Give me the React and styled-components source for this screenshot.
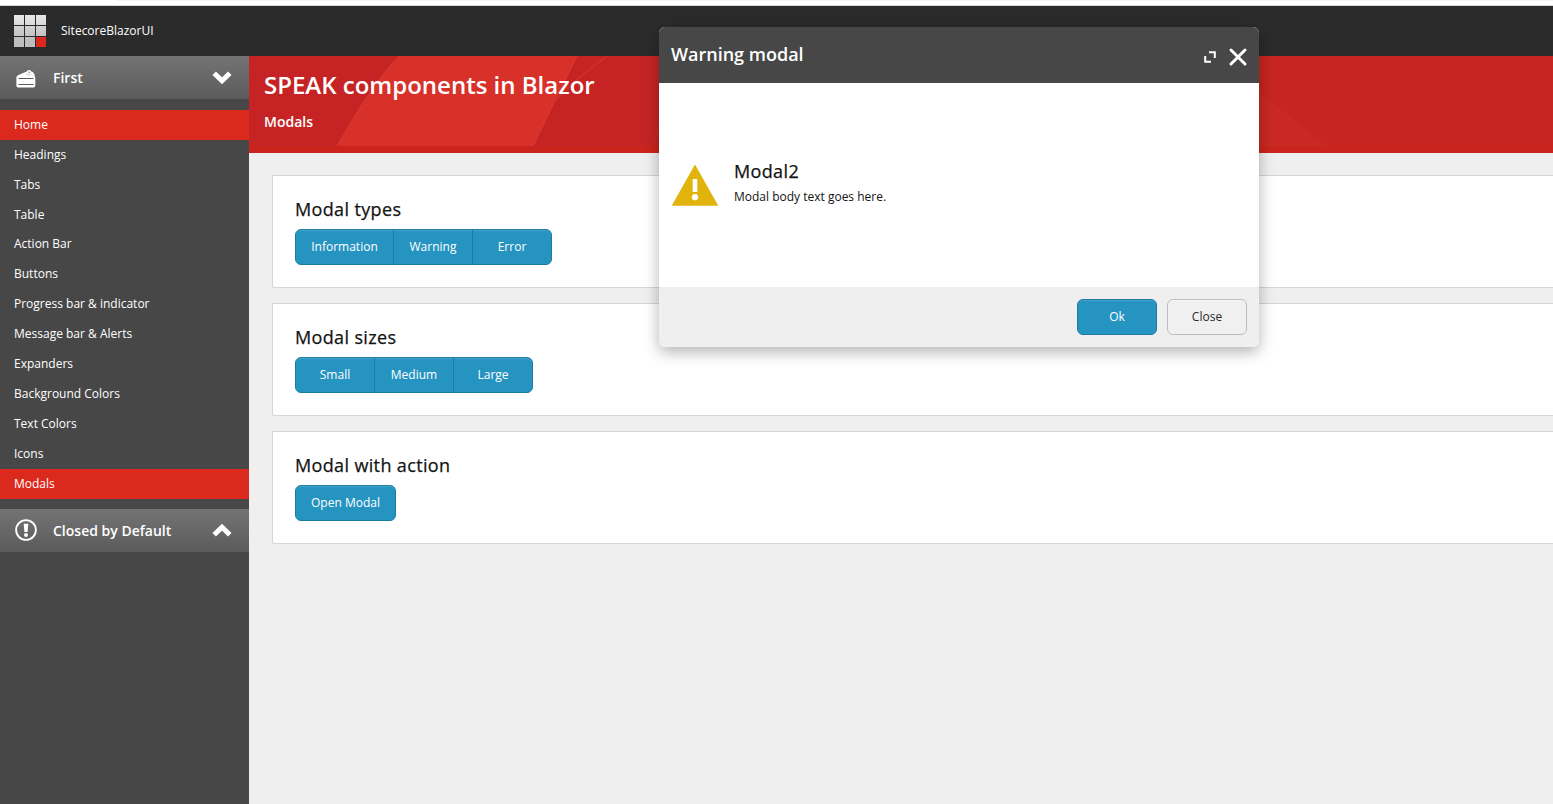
import React from 'react';
import styled, { createGlobalStyle, css } from 'styled-components';

const GlobalStyle = createGlobalStyle`
  * { box-sizing: border-box; }
  html, body { margin: 0; height: 100%; overflow: hidden; }
  body {
    background: #efefef;
    font-family: "Open Sans", "Noto Sans", sans-serif;
    font-size: 12px;
    line-height: 18px;
    color: #131313;
  }
  h1, h2, p { margin: 0; }
`;

const Page = styled.div`
  display: flex;
  flex-direction: column;
  width: 100%;
  height: 804px;
  overflow: hidden;
`;

const WindowEdge = styled.div`
  flex: none;
  height: 6px;
  background: linear-gradient(#f2f2f2, #f2f2f2) 117px 0 / 100% 1px no-repeat #fff;
  border-bottom: 1px solid #d3dbd5;
`;

const TopBar = styled.header`
  flex: none;
  display: flex;
  align-items: center;
  gap: 15px;
  height: 50px;
  padding-left: 14px;
  background: #2b2b2b;
  color: #fff;
`;

const AppName = styled.span`
  font-size: 12px;
`;

const Logo = styled.div`
  display: grid;
  grid-template-columns: repeat(3, 10px);
  grid-auto-rows: 10px;
  gap: 1px;
`;

const LogoTile = styled.span`
  background: ${(p) => p.$fill};
`;

const Body = styled.div`
  flex: 1;
  display: flex;
  min-height: 0;
`;

const Sidebar = styled.nav`
  flex: none;
  width: 249px;
  background: #474747;
  color: #fff;
`;

const GroupHeader = styled.div`
  display: flex;
  align-items: center;
  height: 43px;
  padding: 0 17px 0 15px;
  background: linear-gradient(#747474, #5b5b5b);
  font-size: 14px;
  font-weight: 600;
`;

const GroupTitle = styled.span`
  flex: 1;
  margin-left: 16px;
`;

const NavList = styled.div`
  height: 410px;
  padding-top: 10.9px;
`;

const NavItem = styled.div`
  height: 29.892px;
  padding-left: 14px;
  line-height: 30px;
  background: ${(p) => (p.$active ? '#dc291e' : 'transparent')};
  &:last-child { height: 30.4px; }
`;

const Main = styled.main`
  flex: 1;
  min-width: 0;
`;

const Banner = styled.section`
  position: relative;
  height: 97px;
  padding: 11px 15px;
  background: #c62424;
  border-bottom: 7px solid #cb241c;
  color: #fff;
`;

const BannerArt = styled.svg`
  position: absolute;
  left: 0;
  top: 0;
`;

const Title = styled.h1`
  position: relative;
  font-size: 24px;
  line-height: 36px;
  font-weight: 600;
`;

const Subtitle = styled.h2`
  position: relative;
  margin-top: 10px;
  font-size: 14px;
  line-height: 18px;
  font-weight: 600;
`;

const Cards = styled.div`
  display: flex;
  flex-direction: column;
  gap: 15px;
  padding: 22px 0 0 23px;
`;

const Card = styled.section`
  height: 113px;
  padding: 21px 22px;
  background: #fff;
  border: 1px solid #d5d5d5;
  border-right: 0;
  border-radius: 2px 0 0 2px;
`;

const Heading = styled.h2`
  font-size: 18px;
  line-height: 24px;
  font-weight: 400;
  letter-spacing: 0.36px;
  -webkit-text-stroke: 0.25px currentColor;
`;

const ButtonGroup = styled.div`
  display: flex;
  margin-top: 8px;
`;

const Button = styled.button`
  height: 36px;
  min-width: 80px;
  padding: 0 15px;
  border: 1px solid #1d7ba2;
  border-radius: 0;
  background: #2694c1;
  box-shadow: inset 0 1px #45a5cc;
  color: #fff;
  font: 12px/18px "Open Sans", "Noto Sans", sans-serif;
  white-space: nowrap;
  & + & { margin-left: -1px; }
  &:first-child { border-top-left-radius: 6px; border-bottom-left-radius: 6px; }
  &:last-child { border-top-right-radius: 6px; border-bottom-right-radius: 6px; }
  ${(p) => p.$width && css`width: ${p.$width}px; padding: 0;`}
`;

const DialogButton = styled(Button)`
  width: 80px;
  border-radius: 6px;
  &:first-child, &:last-child { border-radius: 6px; }
  & + & { margin-left: 10px; }
  ${(p) => p.$plain && css`
    background: #f0f0f0;
    border-color: #bdbdbd;
    box-shadow: inset 0 1px #f7f7f7;
    color: #2b2b2b;
  `}
`;

const Dialog = styled.div`
  position: absolute;
  left: 659px;
  top: 27px;
  display: flex;
  flex-direction: column;
  width: 600px;
  height: 320px;
  border-radius: 6px;
  overflow: hidden;
  background: #fff;
  box-shadow: 0 5px 15px rgba(0, 0, 0, 0.3);
`;

const DialogHeader = styled.div`
  display: flex;
  align-items: center;
  height: 56px;
  padding: 0 12px;
  background: #474747;
  color: #fff;
`;

const DialogTitle = styled.h2`
  flex: 1;
  padding-bottom: 2px;
  font-size: 18px;
  line-height: 24px;
  font-weight: 600;
`;

const DialogIcon = styled.svg`
  flex: none;
  margin-top: 4px;
  & + & { margin-left: 13px; }
`;

const DialogBody = styled.div`
  flex: 1;
  display: flex;
  align-items: center;
  gap: 15px;
  padding: 0 12px;
`;

const DialogText = styled.div`
  padding-bottom: 5px;
`;

const Message = styled.p`
  margin-top: 5px;
`;

const DialogFooter = styled.div`
  display: flex;
  justify-content: flex-end;
  height: 60px;
  padding: 12px;
  background: #efefef;
`;

const navItems = [
  'Home', 'Headings', 'Tabs', 'Table', 'Action Bar', 'Buttons', 'Progress bar & indicator',
  'Message bar & Alerts', 'Expanders', 'Background Colors', 'Text Colors', 'Icons', 'Modals',
];

const tileFills = [
  'linear-gradient(#e9e9e9, #d9d9d9)',
  'linear-gradient(#d3d3d3, #c2c2c2)',
  '#bebebe',
];

const CakeIcon = () => (
  <svg width="22" height="22" viewBox="0 0 22 22">
    <path d="M1.400 10.500Q1.400 9 3 8.300L11 4.800H17.500Q20.300 7 20.300 11V18.800Q20.300 20.500 18.600 20.500H3.100Q1.400 20.500 1.400 18.800Z" fill="#fff" />
    <circle cx="14" cy="5.500" r="2.500" fill="#fff" />
    <circle cx="14.200" cy="5.300" r="0.800" fill="#777" />
    <path d="M10.800 6.300Q13.500 9.500 16.500 6.500" fill="none" stroke="#aaa" strokeWidth="0.600" />
    <path d="M3.500 11.500H18.500M3.500 17.500H18.500" stroke="#5f5f5f" strokeWidth="1" />
  </svg>
);

const AlertIcon = () => (
  <svg width="22" height="22" viewBox="0 0 22 22" overflow="visible">
    <circle cx="11" cy="10" r="9.900" fill="none" stroke="#fff" strokeWidth="1.800" />
    <path d="M8.700 3.700H13.300L12.600 11.900H9.400Z" fill="#fff" />
    <circle cx="11" cy="14.900" r="2" fill="#fff" />
  </svg>
);

const Chevron = ({ up }) => (
  <svg width="20" height="14" viewBox="0 0 20 14">
    <path d={up ? 'M2.200 10.800L10 3.200L17.800 10.800' : 'M2.200 2.200L10 9.800L17.800 2.200'} fill="none" stroke="#fff" strokeWidth="5" />
  </svg>
);

const ExpandIcon = () => (
  <DialogIcon width="12" height="12" viewBox="0 0 12 12">
    <path d="M5 1.200H10.800V7M1.200 5V10.800H7" fill="none" stroke="#fff" strokeWidth="2" />
  </DialogIcon>
);

const CloseIcon = () => (
  <DialogIcon width="18" height="18" viewBox="0 0 18 18">
    <path d="M2 2L16 16M16 2L2 16" stroke="#fff" strokeWidth="2.900" strokeLinecap="round" />
  </DialogIcon>
);

const WarningIcon = () => (
  <svg width="48" height="42" viewBox="0 0 48 42">
    <path d="M24 0.500L47.300 41.700H0.700Z" fill="#e0b40a" />
    <path d="M21.700 15H26.300V28H21.700Z" fill="#fff" />
    <circle cx="24" cy="33.200" r="3.100" fill="#fff" />
  </svg>
);

export default function App() {
  return (
    <Page>
      <GlobalStyle />
      <WindowEdge />
      <TopBar>
        <Logo>
          {Array.from({ length: 9 }, (_, i) => (
            <LogoTile key={i} $fill={i === 8 ? '#dc291e' : tileFills[Math.floor(i / 3)]} />
          ))}
        </Logo>
        <AppName>SitecoreBlazorUI</AppName>
      </TopBar>
      <Body>
        <Sidebar>
          <GroupHeader>
            <CakeIcon />
            <GroupTitle>First</GroupTitle>
            <Chevron />
          </GroupHeader>
          <NavList>
            {navItems.map((name) => (
              <NavItem key={name} $active={name === 'Home' || name === 'Modals'}>{name}</NavItem>
            ))}
          </NavList>
          <GroupHeader>
            <AlertIcon />
            <GroupTitle>Closed by Default</GroupTitle>
            <Chevron up />
          </GroupHeader>
        </Sidebar>
        <Main>
          <Banner>
            <BannerArt width="1304" height="90" viewBox="0 0 1304 90">
              <path d="M150 0C136 14 125 31 114 47C104 62 96 76 88 90H284L328 0Z" fill="#d83129" />
              <path d="M150 0C136 14 125 31 114 47C104 62 96 76 88 90M284 90L328 0" fill="none" stroke="#dc3a2a" />
              <path d="M358 0Q330 20 307 44" fill="none" stroke="#cd3027" strokeWidth="2" />
              <path d="M410 70L404 90" fill="none" stroke="#cd3027" />
              <path d="M1005 0H1304V90H1079L1005 32Z" fill="#c82520" />
              <path d="M1005 32L1079 90H1005Z" fill="#ca2923" />
            </BannerArt>
            <Title>SPEAK components in Blazor</Title>
            <Subtitle>Modals</Subtitle>
          </Banner>
          <Cards>
            <Card>
              <Heading>Modal types</Heading>
              <ButtonGroup>
                <Button $width={99}>Information</Button>
                <Button $width={80}>Warning</Button>
                <Button $width={80}>Error</Button>
              </ButtonGroup>
            </Card>
            <Card>
              <Heading>Modal sizes</Heading>
              <ButtonGroup>
                <Button $width={80}>Small</Button>
                <Button $width={80}>Medium</Button>
                <Button $width={80}>Large</Button>
              </ButtonGroup>
            </Card>
            <Card>
              <Heading>Modal with action</Heading>
              <ButtonGroup>
                <Button $width={101}>Open Modal</Button>
              </ButtonGroup>
            </Card>
          </Cards>
        </Main>
      </Body>
      <Dialog>
        <DialogHeader>
          <DialogTitle>Warning modal</DialogTitle>
          <ExpandIcon />
          <CloseIcon />
        </DialogHeader>
        <DialogBody>
          <WarningIcon />
          <DialogText>
            <Heading>Modal2</Heading>
            <Message>Modal body text goes here.</Message>
          </DialogText>
        </DialogBody>
        <DialogFooter>
          <DialogButton>Ok</DialogButton>
          <DialogButton $plain>Close</DialogButton>
        </DialogFooter>
      </Dialog>
    </Page>
  );
}
